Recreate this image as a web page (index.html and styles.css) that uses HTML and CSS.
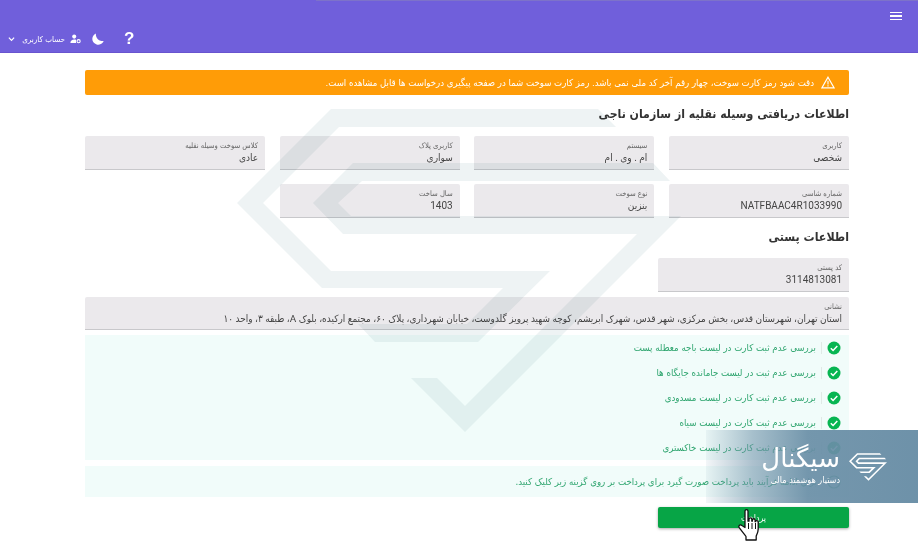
FILE: index.html
```html
<!DOCTYPE html>
<html lang="fa" dir="rtl">
<head>
  <meta charset="UTF-8" />
  <meta name="viewport" content="width=device-width, initial-scale=1.0"/>
  <title>اطلاعات دریافتی</title>
  <link rel="stylesheet" href="styles.css">
</head>
<body>

  <header class="topbar">
    <div class="topbar-row topbar-row-menu">
      <span class="burger"><i></i><i></i><i></i></span>
    </div>
    <div class="topbar-row">
      <svg class="chevron" viewBox="0 0 8 6"><path d="M1 1.5l3 3 3-3" fill="none" stroke="#fff" stroke-width="1.4"/></svg>
      <span class="account-name">حساب کاربری</span>
      <svg class="account-icon" viewBox="0 0 12 10"><circle cx="4.6" cy="2.4" r="2.2" fill="#fff"/><path d="M0.4 9.4c0-2.6 1.8-3.9 4.2-3.9 0.8 0 1.4 0.1 2 0.4v3.5z" fill="#fff"/><circle cx="9.4" cy="7.4" r="1.7" fill="none" stroke="#fff" stroke-width="1.2"/></svg>
      <svg class="moon" viewBox="0 0 14 14"><path d="M4.6 0.6a6.8 6.8 0 1 0 9 8.600A7.600 7.600 0 0 1 4.600 0.600z" fill="#fff"/></svg>
      <span class="help">?</span>
    </div>
  </header>

  <main class="content">
    <div class="alert">
      <svg class="alert-icon" viewBox="0 0 14 13"><path d="M7 1.2L13 11.8H1z" fill="none" stroke="#fff" stroke-width="1.2"/><path d="M7 4.8v3.6M7 9.2v1.2" stroke="#fff" stroke-width="1.1"/></svg>
      <span>دقت شود رمز کارت سوخت، چهار رقم آخر کد ملی نمی باشد. رمز کارت سوخت شما در صفحه پیگیری درخواست ها قابل مشاهده است.</span>
    </div>

    <h2 class="section-title">اطلاعات دریافتی وسیله نقلیه از سازمان ناجی</h2>
    <div class="field-grid">
      <div class="field"><label>کاربری</label><p>شخصی</p></div>
      <div class="field"><label>سیستم</label><p>ام . وی . ام</p></div>
      <div class="field"><label>کاربری پلاک</label><p>سواری</p></div>
      <div class="field"><label>کلاس سوخت وسیله نقلیه</label><p>عادی</p></div>
      <div class="field"><label>شماره شاسی</label><p>NATFBAAC4R1033990</p></div>
      <div class="field"><label>نوع سوخت</label><p>بنزین</p></div>
      <div class="field"><label>سال ساخت</label><p>1403</p></div>
    </div>

    <h2 class="section-title section-title-post">اطلاعات پستی</h2>
    <div class="field field-postal"><label>کد پستی</label><p>3114813081</p></div>
    <div class="field field-address"><label>نشانی</label><p>استان تهران، شهرستان قدس، بخش مرکزی، شهر قدس، شهرک ابریشم، کوچه شهید پرویز گلدوست، خیابان شهرداری، پلاک ۶۰، مجتمع ارکیده، بلوک A، طبقه ۳، واحد ۱۰</p></div>

    <ul class="checks">
      <li><svg class="check" viewBox="0 0 14 14"><use href="#tick"/></svg><span>بررسی عدم ثبت کارت در لیست باجه معطله پست</span></li>
      <li><svg class="check" viewBox="0 0 14 14"><use href="#tick"/></svg><span>بررسی عدم ثبت در لیست جامانده جایگاه ها</span></li>
      <li><svg class="check" viewBox="0 0 14 14"><use href="#tick"/></svg><span>بررسی عدم ثبت کارت در لیست مسدودی</span></li>
      <li><svg class="check" viewBox="0 0 14 14"><use href="#tick"/></svg><span>بررسی عدم ثبت کارت در لیست سیاه</span></li>
      <li><svg class="check" viewBox="0 0 14 14"><use href="#tick"/></svg><span>بررسی عدم ثبت کارت در لیست خاکستری</span></li>
    </ul>

    <div class="notice">
      <svg class="check" viewBox="0 0 14 14"><circle cx="7" cy="7" r="6" fill="none" stroke="#2fa56f" stroke-width="1.2"/></svg>
      <span>برای ادامه فرآیند باید پرداخت صورت گیرد برای پرداخت بر روی گزینه زیر کلیک کنید.</span>
    </div>

    <button class="pay">پرداخت</button>
  </main>

  <svg class="watermark" viewBox="0 0 918 541">
    <defs>
      <symbol id="mark" viewBox="237 109 444 323">
        <path d="M331 109H598L616 127H339L263 203L331 271H550L478 342H375L358 324H467L503 288H322L237 203Z"/>
        <path d="M353 163H653L670 181H362L338 203L351 216H681L465 432L411 378H437L465 406L637 234H343L313 203Z"/>
      </symbol>
      <symbol id="tick" viewBox="0 0 14 14">
        <circle cx="7" cy="7" r="6.5" fill="#07b552"/>
        <path d="M3.8 7.2l2.3 2.3 4.2-4.4" fill="none" stroke="#fff" stroke-width="1.5"/>
      </symbol>
    </defs>
    <use href="#mark" x="237" y="109" width="444" height="323" fill="#eef3f4"/>
  </svg>

  <aside class="brand">
    <div class="brand-text">
      <strong>سیگنال</strong>
      <span>دستیار هوشمند مالی</span>
    </div>
    <svg class="brand-logo" viewBox="0 0 38 28"><use href="#mark" width="38" height="28" fill="#fff"/></svg>
  </aside>

  <svg class="cursor" viewBox="0 0 24 32">
    <path d="M8 2.2c0-2 3-2 3 0v10l1 0v-2c0-1.8 2.8-1.8 2.8 0v2h.6v-1.2c0-1.7 2.7-1.7 2.7 0v1.7h.5c0-1.6 2.6-1.5 2.6.2v7c0 3-1 4.600-2 7v4.100H9v-3.500c-1.500-2.200-4-5-6.800-8.800-1.300-1.900 1-3.700 2.700-2.200L8 18.500z" fill="#fff" stroke="#111" stroke-width="1.300" stroke-linejoin="round"/>
    <path d="M11.500 14v6M15 14v6M18.500 14v6" stroke="#111" stroke-width="1"/>
  </svg>

</body>
</html>
```

FILE: styles.css
```css
* {
  box-sizing: border-box;
}

html, body {
  height: 541px;
  overflow: hidden;
}

body {
  margin: 0;
  position: relative;
  font-family: 'DejaVu Sans Condensed', 'DejaVu Sans', sans-serif;
  background: #fff;
  color: #333;
}

.topbar {
  height: 53px;
  padding: 8px 16px 0 8px;
  background: linear-gradient(90deg, #705fdb 316px, #7d72c9 316px) top / 100% 1px no-repeat, #705fdb;
  border-bottom: 1px solid #6854cf;
  color: #fff;
}

.topbar-row {
  direction: ltr;
  display: flex;
  align-items: center;
  height: 16px;
}

.topbar-row-menu {
  justify-content: flex-end;
  margin-bottom: 7px;
}

.burger {
  display: flex;
  flex-direction: column;
  gap: 2px;
  width: 12px;
}

.burger i {
  display: block;
  height: 1.500px;
  background: #fff;
}

.chevron {
  width: 7px;
  height: 6px;
  margin-right: 7px;
}

.account-name {
  font-size: 8px;
  width: 43px;
  white-space: nowrap;
  direction: rtl;
}

.account-icon {
  width: 11px;
  height: 10px;
  margin-left: 5px;
}

.moon {
  width: 12px;
  height: 12px;
  margin-left: 11px;
}

.help {
  font-family: 'Liberation Sans', sans-serif;
  font-weight: 700;
  font-size: 17px;
  margin-left: 20px;
}

.content {
  padding: 17px 69px 0 85px;
}

.alert {
  display: flex;
  align-items: center;
  height: 25px;
  padding: 0 14px 0 8px;
  gap: 7px;
  background: #ff9c07;
  border-radius: 2px;
  color: #fff;
  font-size: 9.550px;
  white-space: nowrap;
}

.alert-icon {
  width: 14px;
  height: 13px;
  flex: none;
}

.section-title {
  margin: 11px 0 13px;
  height: 17px;
  line-height: 17px;
  font-size: 12.200px;
  font-weight: 700;
  color: #333;
}

.section-title-post {
  margin: 11px 0 12px;
  font-size: 12.300px;
}

.field-grid {
  display: grid;
  grid-template-columns: repeat(4, 180px);
  gap: 14px 14.670px;
}

.field {
  height: 34px;
  padding: 5px 7px 0;
  background: #ebe9ec;
  border-bottom: 1px solid #c8c8cb;
  border-radius: 2px 2px 0 0;
}

.field label {
  display: block;
  height: 9px;
  line-height: 9px;
  font-size: 7.600px;
  color: #666;
}

.field p {
  margin: 1px 0 0;
  height: 13px;
  line-height: 13px;
  font-family: Roboto, 'DejaVu Sans Condensed', sans-serif;
  font-size: 10px;
  color: #444;
  white-space: nowrap;
}

.field-postal {
  width: 191px;
}

.field-address {
  height: 33px;
  margin-top: 5px;
}

.field-address p {
  font-size: 9.950px;
}

.checks {
  list-style: none;
  margin: 5px 0 0;
  padding: 0 8px;
  height: 125px;
  background: #f1fcfa;
}

.checks li {
  display: flex;
  align-items: center;
  height: 25px;
  gap: 5px;
  font-size: 9.650px;
  color: #2fa56f;
}

.checks span {
  padding-right: 5px;
  border-right: 1px solid #dfe9e6;
  line-height: 12px;
}

.check {
  width: 14px;
  height: 14px;
  flex: none;
}

.notice {
  display: flex;
  align-items: center;
  gap: 10px;
  height: 31px;
  margin-top: 6px;
  padding: 0 8px;
  background: #f1fcfa;
  font-size: 9.600px;
  color: #2fa56f;
}

.pay {
  display: block;
  width: 191px;
  height: 21px;
  margin-top: 10px;
  border: none;
  border-radius: 2px;
  background: #07a546;
  color: #fff;
  font-family: inherit;
  font-size: 8.800px;
  box-shadow: 0 1px 3px rgba(0,0,0,0.35);
}

.watermark {
  position: absolute;
  top: 0;
  left: 0;
  width: 918px;
  height: 541px;
  mix-blend-mode: multiply;
  pointer-events: none;
}

.brand {
  position: absolute;
  top: 430px;
  right: 0;
  width: 212px;
  height: 73px;
  direction: ltr;
  display: flex;
  align-items: center;
  justify-content: flex-end;
  padding-right: 31px;
  gap: 9px;
  background: linear-gradient(90deg, rgba(105,142,166,0.08) 0%, rgba(105,142,166,0.55) 22%, rgba(105,142,166,0.92) 48%, rgba(105,142,166,0.97) 100%);
  color: #fff;
}

.brand-logo {
  width: 38px;
  height: 28px;
  flex: none;
}

.brand-text {
  direction: rtl;
  display: flex;
  flex-direction: column;
  margin-top: -5px;
}

.brand-text strong {
  font-family: 'DejaVu Sans', sans-serif;
  font-size: 26px;
  font-weight: 400;
  line-height: 32px;
}

.brand-text span {
  font-size: 9px;
  line-height: 12px;
}

.cursor {
  position: absolute;
  top: 509px;
  left: 737px;
  width: 24px;
  height: 32px;
}
```
